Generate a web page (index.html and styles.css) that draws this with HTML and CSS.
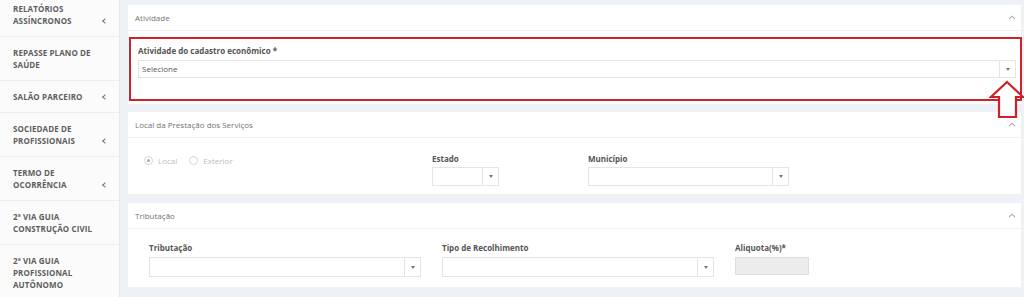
FILE: index.html
```html
<!DOCTYPE html>
<html lang="pt-BR">
<head>
  <meta charset="UTF-8" />
  <meta name="viewport" content="width=device-width, initial-scale=1.0">
  <title>Cadastro econômico</title>
  <link rel="stylesheet" href="styles.css">
</head>
<body>

<div class="page">

  <!-- Menu lateral -->
  <nav class="sidebar">
    <div class="nav-item nav-first"><span>RELATÓRIOS<br>ASSÍNCRONOS</span><i class="nav-arrow"></i></div>
    <div class="nav-item"><span>REPASSE PLANO DE<br>SAÚDE</span></div>
    <div class="nav-item"><span>SALÃO PARCEIRO</span><i class="nav-arrow"></i></div>
    <div class="nav-item"><span>SOCIEDADE DE<br>PROFISSIONAIS</span><i class="nav-arrow"></i></div>
    <div class="nav-item"><span>TERMO DE<br>OCORRÊNCIA</span><i class="nav-arrow"></i></div>
    <div class="nav-item"><span>2ª VIA GUIA<br>CONSTRUÇÃO CIVIL</span></div>
    <div class="nav-item"><span>2ª VIA GUIA<br>PROFISSIONAL<br>AUTÔNOMO</span></div>
  </nav>

  <main class="content">

    <!-- Atividade -->
    <section class="card card-activity">
      <div class="card-header">
        <span>Atividade</span>
        <svg class="collapse" width="8" height="5" viewBox="0 0 8 5"><polyline points="1,4.2 4,1.2 7,4.2" /></svg>
      </div>
      <div class="card-body">
        <div class="highlight">
          <label class="field-label">Atividade do cadastro econômico *</label>
          <div class="select">
            <span class="select-value">Selecione</span>
            <span class="select-caret"></span>
          </div>
        </div>
      </div>
    </section>

    <!-- Local da prestação -->
    <section class="card card-place">
      <div class="card-header">
        <span>Local da Prestação dos Serviços</span>
        <svg class="collapse" width="8" height="5" viewBox="0 0 8 5"><polyline points="1,4.2 4,1.2 7,4.2" /></svg>
      </div>
      <div class="card-body place-grid">
        <div class="radios">
          <span class="radio checked"></span><span class="radio-label">Local</span>
          <span class="radio"></span><span class="radio-label">Exterior</span>
        </div>
        <div class="field">
          <label class="field-label">Estado</label>
          <div class="select select-small">
            <span class="select-value"></span>
            <span class="select-caret"></span>
          </div>
        </div>
        <div class="field">
          <label class="field-label">Município</label>
          <div class="select">
            <span class="select-value"></span>
            <span class="select-caret"></span>
          </div>
        </div>
      </div>
    </section>

    <!-- Tributação -->
    <section class="card card-tax">
      <div class="card-header">
        <span>Tributação</span>
        <svg class="collapse" width="8" height="5" viewBox="0 0 8 5"><polyline points="1,4.2 4,1.2 7,4.2" /></svg>
      </div>
      <div class="card-body tax-grid">
        <div class="field">
          <label class="field-label">Tributação</label>
          <div class="select select-tall">
            <span class="select-value"></span>
            <span class="select-caret"></span>
          </div>
        </div>
        <div class="field">
          <label class="field-label">Tipo de Recolhimento</label>
          <div class="select select-tall">
            <span class="select-value"></span>
            <span class="select-caret"></span>
          </div>
        </div>
        <div class="field">
          <label class="field-label">Aliquota(%)*</label>
          <div class="input-disabled"></div>
        </div>
      </div>
    </section>

  </main>

  <!-- seta de destaque -->
  <svg class="pointer" width="36" height="40" viewBox="0 0 36 40">
    <polygon points="18,2 34,17 27,17 27,37 10,37 10,17 2,17" />
  </svg>

</div>

</body>
</html>
```

FILE: styles.css
```css
body {
  margin: 0;
  padding: 0;
  font-family: 'Open Sans', 'Liberation Sans', sans-serif;
  background: #eef1f5;
}

.page {
  position: relative;
  display: flex;
  width: 1024px;
  height: 297px;
  overflow: hidden;
}

/* sidebar */
.sidebar {
  width: 119px;
  flex-shrink: 0;
  background-color: #fbfbfc;
  border-right: 1px solid #e6e9ed;
}

.nav-item {
  display: flex;
  justify-content: space-between;
  align-items: flex-end;
  padding: 10px 13px 9px 13px;
  border-bottom: 1px solid #ebedf0;
  font-size: 8px;
  font-weight: 700;
  line-height: 12px;
  color: #5e5e5e;
  letter-spacing: 0.1px;
}

.nav-first {
  padding-top: 3px;
}

.nav-arrow {
  width: 4px;
  height: 12px;
  position: relative;
}

.nav-arrow::before {
  content: "";
  position: absolute;
  left: 1px;
  top: 4px;
  width: 3px;
  height: 3px;
  border-left: 1.2px solid #707070;
  border-bottom: 1.2px solid #707070;
  transform: rotate(45deg);
}

/* main */
.content {
  flex: 1;
  padding: 5px 3px 0 8px;
}

.card {
  background: #ffffff;
  margin-bottom: 8px;
}

.card-place {
  margin-bottom: 9px;
}

.card-header {
  box-sizing: border-box;
  height: 26px;
  display: flex;
  justify-content: space-between;
  align-items: center;
  padding: 0 5px 0 7px;
  border-bottom: 1px solid #eef0f3;
  font-size: 8px;
  color: #727272;
}

.collapse polyline {
  fill: none;
  stroke: #a9a9a9;
  stroke-width: 1.1;
}

.card-activity .card-body {
  padding: 6px 0 3px 1px;
}

.highlight {
  border: 2px solid #cf2129;
  padding: 6px 4px 21px 7px;
  margin-right: -1px;
}

.field-label {
  display: block;
  font-size: 8px;
  font-weight: 700;
  line-height: 11px;
  color: #555;
  margin-bottom: 4px;
}

.select {
  box-sizing: border-box;
  display: flex;
  height: 18px;
  border: 1px solid #e4e4e4;
  background: #fff;
}

.select-value {
  flex: 1;
  padding-left: 3px;
  font-size: 8px;
  line-height: 16px;
  color: #555;
}

.select-caret {
  width: 15px;
  border-left: 1px solid #e4e4e4;
  display: flex;
  align-items: center;
  justify-content: center;
}

.select-caret::after {
  content: "";
  border-left: 2.5px solid transparent;
  border-right: 2.5px solid transparent;
  border-top: 3px solid #777;
}

/* local da prestação */
.place-grid {
  display: grid;
  grid-template-columns: 288px 156px 201px;
  padding: 15px 0 8px 16px;
}

.place-grid .field-label {
  margin-bottom: 3px;
}

.place-grid .select {
  height: 19px;
}

.select-small {
  width: 67px;
}

.radios {
  display: flex;
  align-items: center;
  height: 11px;
  padding-top: 2px;
  font-size: 8px;
  color: #bdbdbd;
}

.radio {
  box-sizing: border-box;
  width: 9px;
  height: 9px;
  border: 1px solid #d6d6d6;
  border-radius: 50%;
  margin-right: 5px;
  display: flex;
  align-items: center;
  justify-content: center;
}

.radio.checked::after {
  content: "";
  width: 3px;
  height: 3px;
  border-radius: 50%;
  background: #a8a8a8;
}

.radio-label {
  margin-right: 12px;
}

/* tributação */
.tax-grid {
  display: grid;
  grid-template-columns: 272px 272px 74px;
  column-gap: 21px;
  padding: 13px 0 10px 21px;
}

.select-tall {
  height: 20px;
}

.input-disabled {
  box-sizing: border-box;
  height: 18px;
  background: #ececec;
  border: 1px solid #dedede;
}

/* seta vermelha */
.pointer {
  position: absolute;
  left: 989px;
  top: 80px;
}

.pointer polygon {
  fill: #ffffff;
  stroke: #d01f28;
  stroke-width: 2.2;
  stroke-linejoin: miter;
}
```
